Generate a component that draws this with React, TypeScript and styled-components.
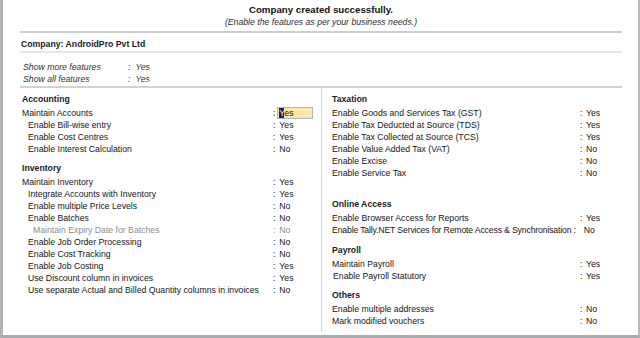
import styled, { createGlobalStyle } from "styled-components";

type Feature = {
  label: string;
  value: string;
  indent?: number;
  muted?: boolean;
  active?: boolean;
  tight?: boolean;
};

type Group = { title: string; gap: number; rows: Feature[] };

const leftGroups: Group[] = [
  {
    title: "Accounting",
    gap: 0,
    rows: [
      { label: "Maintain Accounts", value: "Yes", active: true },
      { label: "Enable Bill-wise entry", value: "Yes", indent: 6 },
      { label: "Enable Cost Centres", value: "Yes", indent: 6 },
      { label: "Enable Interest Calculation", value: "No", indent: 6 },
    ],
  },
  {
    title: "Inventory",
    gap: 7,
    rows: [
      { label: "Maintain Inventory", value: "Yes" },
      { label: "Integrate Accounts with Inventory", value: "Yes", indent: 6 },
      { label: "Enable multiple Price Levels", value: "No", indent: 6 },
      { label: "Enable Batches", value: "No", indent: 6 },
      { label: "Maintain Expiry Date for Batches", value: "No", indent: 11, muted: true },
      { label: "Enable Job Order Processing", value: "No", indent: 6 },
      { label: "Enable Cost Tracking", value: "No", indent: 6 },
      { label: "Enable Job Costing", value: "Yes", indent: 6 },
      { label: "Use Discount column in invoices", value: "Yes", indent: 6 },
      { label: "Use separate Actual and Billed Quantity columns in invoices", value: "No", indent: 6 },
    ],
  },
];

const rightGroups: Group[] = [
  {
    title: "Taxation",
    gap: 0,
    rows: [
      { label: "Enable Goods and Services Tax (GST)", value: "Yes" },
      { label: "Enable Tax Deducted at Source (TDS)", value: "Yes" },
      { label: "Enable Tax Collected at Source (TCS)", value: "Yes" },
      { label: "Enable Value Added Tax (VAT)", value: "No" },
      { label: "Enable Excise", value: "No" },
      { label: "Enable Service Tax", value: "No" },
    ],
  },
  {
    title: "Online Access",
    gap: 19,
    rows: [
      { label: "Enable Browser Access for Reports", value: "Yes" },
      {
        label: "Enable Tally.NET Services for Remote Access & Synchronisation",
        value: "No",
        tight: true,
      },
    ],
  },
  {
    title: "Payroll",
    gap: 8,
    rows: [
      { label: "Maintain Payroll", value: "Yes" },
      { label: "Enable Payroll Statutory", value: "Yes", indent: 1 },
    ],
  },
  {
    title: "Others",
    gap: 7,
    rows: [
      { label: "Enable multiple addresses", value: "No" },
      { label: "Mark modified vouchers", value: "No" },
    ],
  },
];

export default function App() {
  return (
    <>
      <GlobalStyle />
      <Frame>
        <Header>
          <Title>Company created successfully.</Title>
          <Subtitle>(Enable the features as per your business needs.)</Subtitle>
        </Header>
        <Rule $top={3} $color="#cdcdcd" />
        <CompanyName>Company: AndroidPro Pvt Ltd</CompanyName>
        <Rule $top={1} $color="#e6e6e6" />
        <ShowBlock>
          <ShowRow>
            <ShowLabel>Show more features</ShowLabel>
            <span>:</span>
            <ShowValue>Yes</ShowValue>
          </ShowRow>
          <ShowRow>
            <ShowLabel>Show all features</ShowLabel>
            <span>:</span>
            <ShowValue>Yes</ShowValue>
          </ShowRow>
        </ShowBlock>
        <Rule $top={1} $color="#d2d2d2" />
        <Columns>
          <LeftColumn>
            {leftGroups.map((g) => (
              <FeatureGroup key={g.title} group={g} labelWidth={251} boxed />
            ))}
          </LeftColumn>
          <RightColumn>
            {rightGroups.map((g) => (
              <FeatureGroup key={g.title} group={g} labelWidth={248} />
            ))}
          </RightColumn>
        </Columns>
      </Frame>
    </>
  );
}

function FeatureGroup({
  group,
  labelWidth,
  boxed,
}: {
  group: Group;
  labelWidth: number;
  boxed?: boolean;
}) {
  return (
    <Section $gap={group.gap}>
      <SectionTitle>{group.title}</SectionTitle>
      {group.rows.map((r) =>
        r.tight ? (
          <Row key={r.label}>
            <TightLabel>{r.label}</TightLabel>
            <span>:</span>
            <PlainValue $gap={8}>{r.value}</PlainValue>
          </Row>
        ) : (
          <Row key={r.label} $muted={r.muted}>
            <Label $width={labelWidth} $indent={r.indent ?? 0}>
              {r.label}
            </Label>
            <span>:</span>
            {boxed ? (
              <BoxValue $active={r.active}>
                {r.active ? (
                  <>
                    <Cursor>{r.value[0]}</Cursor>
                    {r.value.slice(1)}
                  </>
                ) : (
                  r.value
                )}
              </BoxValue>
            ) : (
              <PlainValue $gap={3.6}>{r.value}</PlainValue>
            )}
          </Row>
        )
      )}
    </Section>
  );
}

const GlobalStyle = createGlobalStyle`
  html, body {
    margin: 0;
    padding: 0;
    background: #ffffff;
  }
  body {
    font-family: "Liberation Sans", Arial, sans-serif;
    font-size: 8.7px;
    color: #151515;
  }
`;

const Frame = styled.div`
  box-sizing: border-box;
  width: 640px;
  height: 338px;
  display: flex;
  flex-direction: column;
  padding: 4px 16px 3px 17px;
  background: #ffffff;
  border-left: 3px solid #b1b5b9;
  border-right: 2px solid #b4b8bc;
  border-bottom: 3px solid #a7abaf;
`;

const Header = styled.div`
  text-align: center;
`;

const Title = styled.div`
  font-size: 9.7px;
  font-weight: bold;
  line-height: 12px;
  color: #111;
`;

const Subtitle = styled.div`
  font-style: italic;
  line-height: 12px;
  color: #2e2e2e;
`;

const Rule = styled.div<{ $top: number; $color: string }>`
  margin-top: ${(p) => p.$top}px;
  height: 2px;
  background: ${(p) => p.$color};
  flex-shrink: 0;
`;

const CompanyName = styled.div`
  margin-top: 5px;
  padding-left: 1px;
  line-height: 12px;
  font-weight: bold;
  color: #1a1a1a;
`;

const ShowBlock = styled.div`
  margin-top: 8px;
`;

const ShowRow = styled.div`
  display: flex;
  height: 12px;
  line-height: 12px;
  font-style: italic;
  color: #333;
  white-space: nowrap;
`;

const ShowLabel = styled.span`
  box-sizing: border-box;
  width: 108px;
  padding-left: 3px;
`;

const ShowValue = styled.span`
  margin-left: 5px;
`;

const Columns = styled.div`
  flex: 1;
  display: flex;
  min-height: 0;
`;

const LeftColumn = styled.div`
  box-sizing: border-box;
  width: 302px;
  padding: 5px 0 0 2px;
  border-right: 1px solid #d6d6d6;
`;

const RightColumn = styled.div`
  flex: 1;
  padding: 5px 0 0 10px;
`;

const Section = styled.div<{ $gap: number }>`
  margin-top: ${(p) => p.$gap}px;
`;

const SectionTitle = styled.div`
  font-weight: bold;
  line-height: 12px;
  margin-bottom: 2px;
  color: #1a1a1a;
`;

const Row = styled.div<{ $muted?: boolean }>`
  display: flex;
  height: 12px;
  line-height: 12px;
  white-space: nowrap;
  color: ${(p) => (p.$muted ? "#8d8d8d" : "#151515")};
`;

const Label = styled.span<{ $width: number; $indent: number }>`
  box-sizing: border-box;
  width: ${(p) => p.$width}px;
  padding-left: ${(p) => p.$indent}px;
  flex-shrink: 0;
`;

const TightLabel = styled.span`
  letter-spacing: -0.16px;
  margin-right: 2px;
`;

const BoxValue = styled.span<{ $active?: boolean }>`
  box-sizing: border-box;
  width: 36px;
  height: 12px;
  line-height: 10px;
  margin-left: 1.3px;
  padding: 0 1.6px;
  border: 1px solid ${(p) => (p.$active ? "#a9b6c9" : "transparent")};
  background: ${(p) => (p.$active ? "#fce7a6" : "transparent")};
`;

const Cursor = styled.span`
  background: #15236b;
  color: #fce7a6;
`;

const PlainValue = styled.span<{ $gap: number }>`
  margin-left: ${(p) => p.$gap}px;
`;
